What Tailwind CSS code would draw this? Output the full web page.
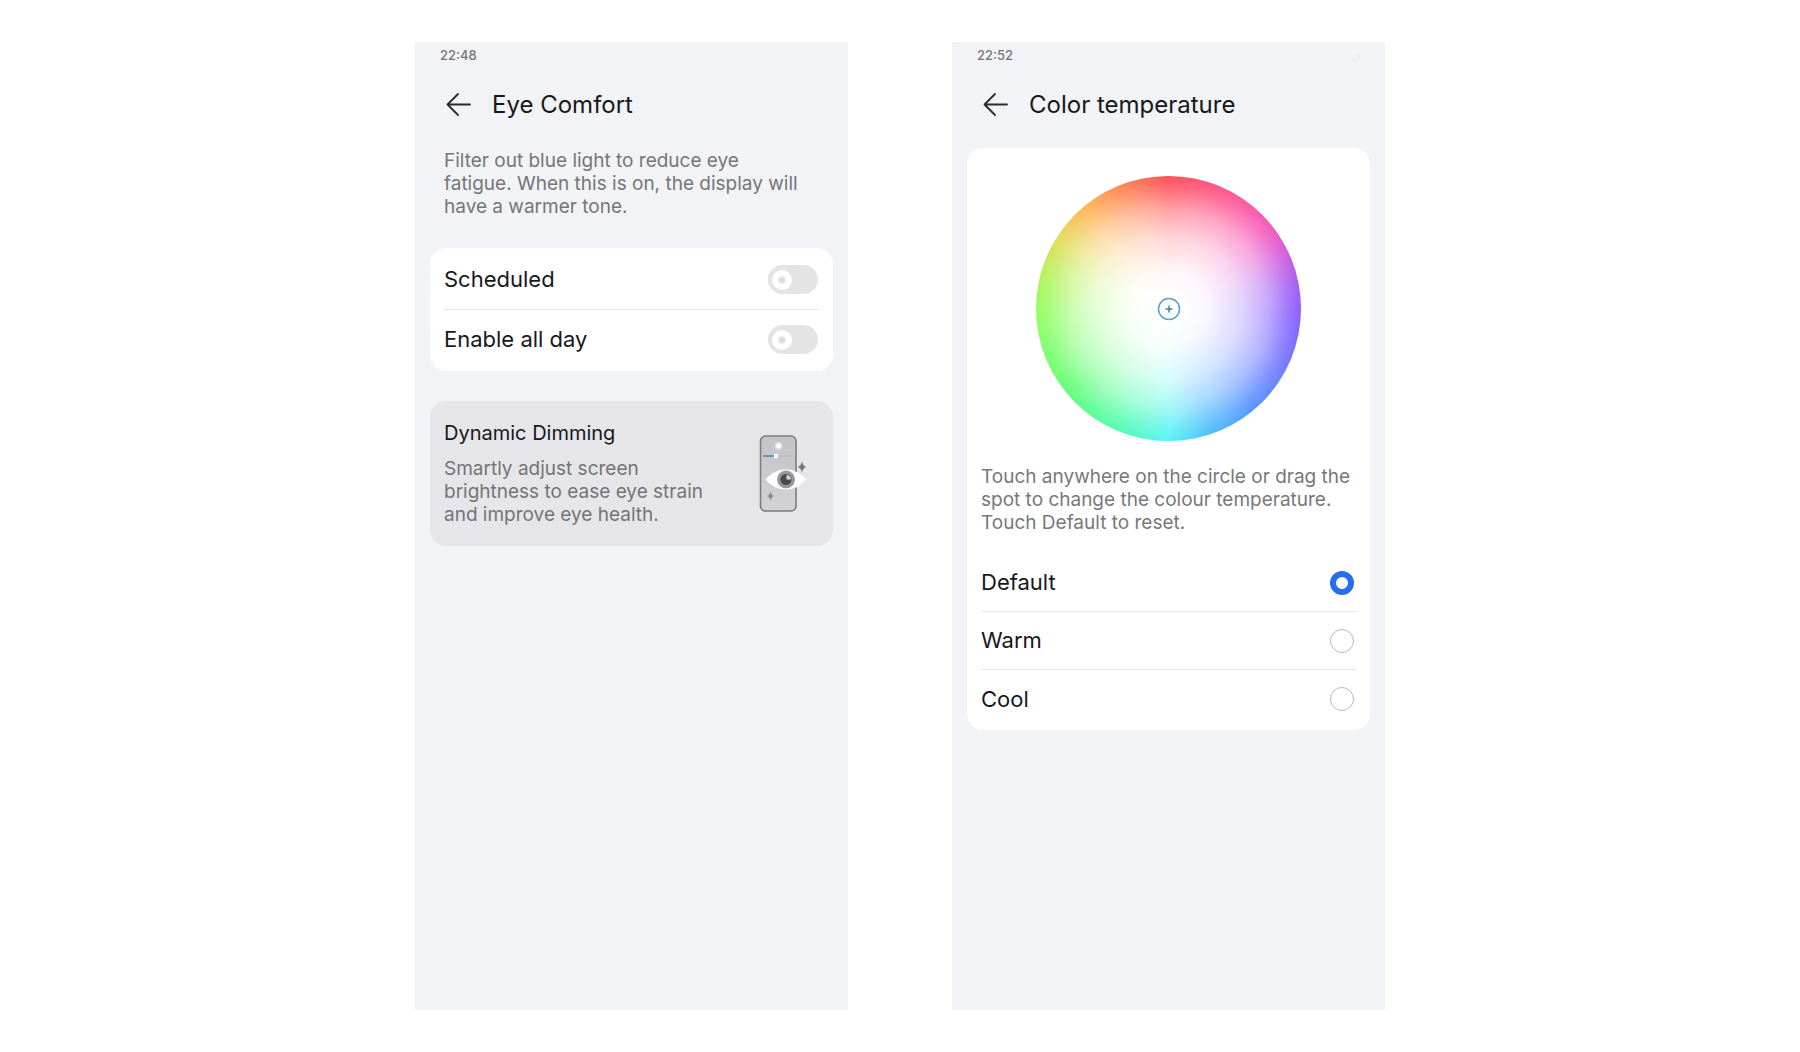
<!DOCTYPE html>
<html lang="en">
  <head>
    <meta charset="UTF-8" />
    <meta name="viewport" content="width=device-width,initial-scale=1.0" />
    <title>Eye Comfort</title>
    <script src="https://cdn.jsdelivr.net/npm/@tailwindcss/browser@4"></script>
  </head>
  <body class="bg-white font-['Inter','Noto_Sans',sans-serif] text-[#17181c]">
    <main class="flex flex-wrap justify-center gap-x-26 gap-y-10 py-[42px]">
      <!-- Eye Comfort screen -->
      <section
        class="w-full max-w-[433px] min-h-[calc(100vh-84px)] bg-[#f1f3f7] px-[15px]"
      >
        <div class="h-7 pl-2.5 flex items-center text-[13px] font-medium text-[#74777b]">
          <time>22:48</time>
        </div>

        <header class="h-[70px] pl-[14px] flex items-center gap-5">
          <button type="button" aria-label="Back">
            <svg
              class="size-7"
              viewBox="0 0 28 28"
              fill="none"
              stroke="#2a2b2f"
              stroke-width="1.8"
              stroke-linecap="round"
              stroke-linejoin="round"
            >
              <path d="M14 3 3.500 13.500 14 24M3.500 13.500h22.500" />
            </svg>
          </button>
          <h1 class="text-2xl">Eye Comfort</h1>
        </header>

        <p class="px-[14px] pt-[9px] text-[19px] leading-[23px] text-[#74767a]">
          Filter out blue light to reduce eye<br />
          fatigue. When this is on, the display will<br />
          have a warmer tone.
        </p>

        <div class="mt-[30px] px-[14px] rounded-2xl bg-white text-[22px]">
          <label class="h-[61px] pt-0.5 flex items-center justify-between">
            Scheduled
            <input
              type="checkbox"
              role="switch"
              class="appearance-none w-[50px] h-[29px] mr-px rounded-full bg-[#e4e4e5] flex items-center px-1 before:size-5 before:rounded-full before:bg-[radial-gradient(circle,#dcdcdd_2px,#fff_5px)] checked:bg-[#256fee] checked:justify-end"
            />
          </label>
          <hr class="border-[#e6e6e8]" />
          <label class="h-[61px] pb-0.5 flex items-center justify-between">
            Enable all day
            <input
              type="checkbox"
              role="switch"
              class="appearance-none w-[50px] h-[29px] mr-px rounded-full bg-[#e4e4e5] flex items-center px-1 before:size-5 before:rounded-full before:bg-[radial-gradient(circle,#dcdcdd_2px,#fff_5px)] checked:bg-[#256fee] checked:justify-end"
            />
          </label>
        </div>

        <a
          href="#"
          class="mt-[30px] h-[145px] pl-[14px] pr-[26px] flex items-center justify-between rounded-2xl bg-[#e6e5ea]"
        >
          <div>
            <h2 class="text-[20px] leading-6">Dynamic Dimming</h2>
            <p class="mt-3 text-[19px] leading-[23px] text-[#737478]">
              Smartly adjust screen<br />
              brightness to ease eye strain<br />
              and improve eye health.
            </p>
          </div>
          <svg class="w-12 h-20" viewBox="0 0 48 80" fill="none">
            <defs>
              <linearGradient id="screen" x1="0" y1="0" x2="0" y2="1">
                <stop offset="0" stop-color="#c3c3c7" />
                <stop offset="1" stop-color="#d3d3d7" />
              </linearGradient>
            </defs>
            <rect
              x="1.500"
              y="2"
              width="35.500"
              height="75"
              rx="5"
              fill="url(#screen)"
              stroke="#7c7c80"
              stroke-width="1.600"
            />
            <!-- brightness slider -->
            <circle cx="19.500" cy="12" r="2.500" fill="#fff" />
            <circle cx="19.500" cy="12" r="4" fill="#fff" opacity=".4" />
            <path d="M4 22h12" stroke="#4b84b0" stroke-width="1.500" />
            <path d="M17 22h17" stroke="#b9b9be" stroke-width="1" />
            <circle cx="17" cy="22" r="2.200" fill="#fff" />
            <!-- sparkles -->
            <path
              d="M43 27q.8 5 4.300 6q-3.500 1-4.300 6q-.8-5-4.300-6q3.500-1 4.300-6z"
              fill="#77777b"
            />
            <path
              d="M11.500 57q.6 4 3.500 5q-2.900 1-3.500 5q-.6-4-3.500-5q2.900-1 3.500-5z"
              fill="#8c8c90"
            />
            <!-- eye -->
            <path
              d="M6.500 45.500C12.500 38.500 19.500 35.500 27 35.500s14 3 20 10c-6 7-12.500 10-20 10s-14.500-3-20.500-10z"
              fill="#fff"
            />
            <circle cx="27" cy="45.500" r="9" fill="#97979a" />
            <circle cx="27" cy="45.500" r="5.500" fill="#49494c" />
            <path d="M27.500 45.500v-4.500a4.500 4.500 0 0 1 4.500 4.500z" fill="#d5d5d7" />
          </svg>
        </a>
      </section>

      <!-- Color temperature screen -->
      <section
        class="w-full max-w-[433px] min-h-[calc(100vh-84px)] bg-[#f1f3f7] px-[15px]"
      >
        <div
          class="h-7 pl-2.5 pr-2 flex items-center justify-between text-[13px] font-medium text-[#74777b]"
        >
          <time>22:52</time>
          <svg class="w-3 h-4" viewBox="0 0 12 16" stroke="#e0e2e6" stroke-width="1">
            <path d="M4 11v3M8.500 6v5" />
          </svg>
        </div>

        <header class="h-[70px] pl-[14px] flex items-center gap-5">
          <button type="button" aria-label="Back">
            <svg
              class="size-7"
              viewBox="0 0 28 28"
              fill="none"
              stroke="#2a2b2f"
              stroke-width="1.8"
              stroke-linecap="round"
              stroke-linejoin="round"
            >
              <path d="M14 3 3.500 13.500 14 24M3.500 13.500h22.500" />
            </svg>
          </button>
          <h1 class="text-2xl">Color temperature</h1>
        </header>

        <div class="mt-2 px-[14px] pt-7 pb-0.5 rounded-2xl bg-white">
          <!-- Color wheel -->
          <div
            class="size-[265px] mx-auto flex items-center justify-center rounded-full bg-[radial-gradient(circle_closest-side,#fff_8%,#fffffff0_30%,#ffffffbc_55%,#ffffff76_75%,#ffffff24_91%,#ffffff00_100%),conic-gradient(#ff5058,#ff5896_30deg,#f65abc_50deg,#d65cd8_64deg,#a660f0_78deg,#8a60ff_92deg,#7872ff_112deg,#5a92ff_138deg,#52bcfc_160deg,#58f4f4_180deg,#56fcb4_202deg,#60fe7c_228deg,#90fe66_265deg,#b4f45c_285deg,#e4dc5c_303deg,#ffb85a_320deg,#ff8456_340deg,#ff5058)]"
          >
            <button type="button" aria-label="Color temperature spot">
              <svg class="size-6" viewBox="0 0 24 24" fill="none">
                <circle
                  cx="12"
                  cy="12"
                  r="10.500"
                  fill="#fff"
                  stroke="#5b9fc8"
                  stroke-width="1.500"
                />
                <path d="M12 8.500v7M8.500 12h7" stroke="#4a7e9e" stroke-width="1.500" />
              </svg>
            </button>
          </div>

          <p class="mt-6 text-[19px] leading-[23px] text-[#77787b] whitespace-nowrap">
            Touch anywhere on the circle or drag the<br />
            spot to change the colour temperature.<br />
            Touch Default to reset.
          </p>

          <div class="mt-5 text-[22px] divide-y divide-[#e6e6e8]">
            <label class="h-[58px] flex items-center justify-between">
              Default
              <input
                type="radio"
                name="temperature"
                checked
                class="appearance-none size-6 mr-0.5 rounded-full border border-[#b8b8ba] checked:border-[6px] checked:border-[#256fee]"
              />
            </label>
            <label class="h-[58px] flex items-center justify-between">
              Warm
              <input
                type="radio"
                name="temperature"
                class="appearance-none size-6 mr-0.5 rounded-full border border-[#b8b8ba] checked:border-[6px] checked:border-[#256fee]"
              />
            </label>
            <label class="h-[58px] flex items-center justify-between">
              Cool
              <input
                type="radio"
                name="temperature"
                class="appearance-none size-6 mr-0.5 rounded-full border border-[#b8b8ba] checked:border-[6px] checked:border-[#256fee]"
              />
            </label>
          </div>
        </div>
      </section>
    </main>
  </body>
</html>
